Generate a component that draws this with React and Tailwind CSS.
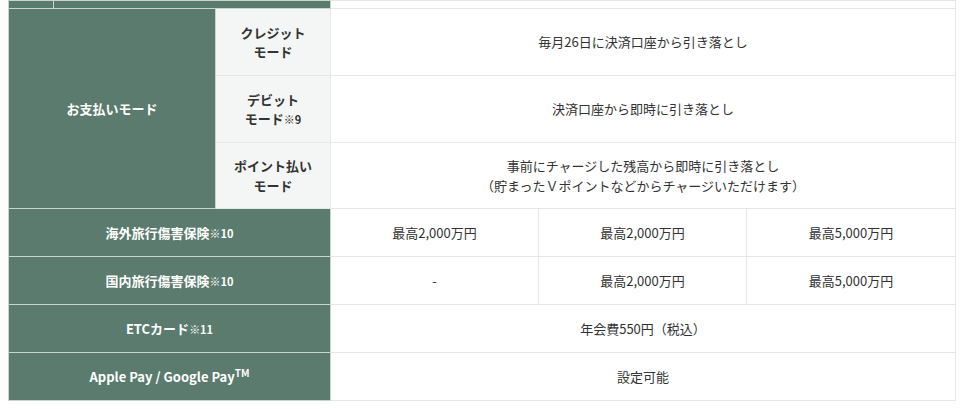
import React from "react";

const green = "bg-[#5a7b6d] text-white font-bold border border-[#c9d4cf]";
const sub = "bg-[#f3f6f5] text-[#333] font-bold border border-[#e6e8e7]";
const cell = "bg-white text-[#333] border border-[#e6e8e7]";

const Note = ({ children }) => (
  <span className="text-[11px] font-bold">{children}</span>
);

export default function App() {
  return (
    <div
      className="min-h-screen bg-white px-2 text-[13px] leading-[1.5]"
      style={{ fontFamily: '"Noto Sans CJK JP", "Noto Sans", sans-serif' }}
    >
      <table className="w-[947px] table-fixed border-collapse text-center">
        <colgroup>
          <col className="w-[207px]" />
          <col className="w-[115px]" />
          <col className="w-[208px]" />
          <col className="w-[208px]" />
          <col className="w-[209px]" />
        </colgroup>
        <tbody>
          <tr>
            <td className={`${green} h-[8px] p-0`} colSpan={2}>
              <div className="flex h-full">
                <div className="w-[45px] border-r border-[#c9d4cf]" />
              </div>
            </td>
            <td className={`${cell} h-[8px] p-0`} colSpan={3} />
          </tr>

          <tr className="h-[67px]">
            <td className={green} rowSpan={3}>
              お支払いモード
            </td>
            <td className={sub}>
              クレジット
              <br />
              モード
            </td>
            <td className={cell} colSpan={3}>
              毎月26日に決済口座から引き落とし
            </td>
          </tr>
          <tr className="h-[67px]">
            <td className={sub}>
              デビット
              <br />
              モード<Note>※9</Note>
            </td>
            <td className={cell} colSpan={3}>
              決済口座から即時に引き落とし
            </td>
          </tr>
          <tr className="h-[66px]">
            <td className={sub}>
              ポイント払い
              <br />
              モード
            </td>
            <td className={cell} colSpan={3}>
              事前にチャージした残高から即時に引き落とし
              <br />
              （貯まったＶポイントなどからチャージいただけます）
            </td>
          </tr>

          <tr className="h-[48px]">
            <td className={green} colSpan={2}>
              海外旅行傷害保険<Note>※10</Note>
            </td>
            <td className={cell}>最高2,000万円</td>
            <td className={cell}>最高2,000万円</td>
            <td className={cell}>最高5,000万円</td>
          </tr>
          <tr className="h-[48px]">
            <td className={green} colSpan={2}>
              国内旅行傷害保険<Note>※10</Note>
            </td>
            <td className={cell}>-</td>
            <td className={cell}>最高2,000万円</td>
            <td className={cell}>最高5,000万円</td>
          </tr>
          <tr className="h-[48px]">
            <td className={green} colSpan={2}>
              ETCカード<Note>※11</Note>
            </td>
            <td className={cell} colSpan={3}>
              年会費550円（税込）
            </td>
          </tr>
          <tr className="h-[48px]">
            <td className={green} colSpan={2}>
              Apple Pay / Google Pay
              <sup className="text-[10px]">TM</sup>
            </td>
            <td className={cell} colSpan={3}>
              設定可能
            </td>
          </tr>
        </tbody>
      </table>
    </div>
  );
}
